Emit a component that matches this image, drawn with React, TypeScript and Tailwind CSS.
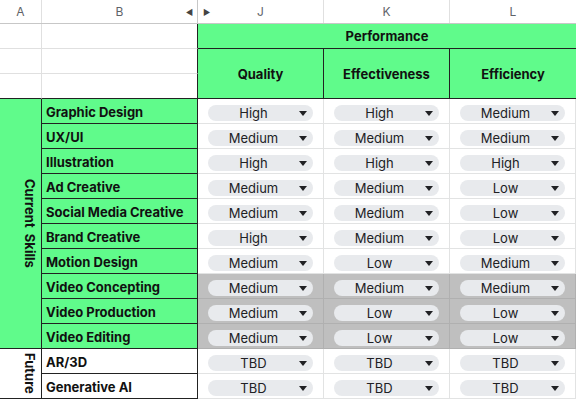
import React from 'react';

type Level = 'High' | 'Medium' | 'Low' | 'TBD';

const skills: { name: string; values: Level[]; shaded?: boolean }[] = [
  { name: 'Graphic Design', values: ['High', 'High', 'Medium'] },
  { name: 'UX/UI', values: ['Medium', 'Medium', 'Medium'] },
  { name: 'Illustration', values: ['High', 'High', 'High'] },
  { name: 'Ad Creative', values: ['Medium', 'Medium', 'Low'] },
  { name: 'Social Media Creative', values: ['Medium', 'Medium', 'Low'] },
  { name: 'Brand Creative', values: ['High', 'Medium', 'Low'] },
  { name: 'Motion Design', values: ['Medium', 'Low', 'Medium'] },
  { name: 'Video Concepting', values: ['Medium', 'Medium', 'Medium'], shaded: true },
  { name: 'Video Production', values: ['Medium', 'Low', 'Low'], shaded: true },
  { name: 'Video Editing', values: ['Medium', 'Low', 'Low'], shaded: true },
];

const future: { name: string; values: Level[] }[] = [
  { name: 'AR/3D', values: ['TBD', 'TBD', 'TBD'] },
  { name: 'Generative AI', values: ['TBD', 'TBD', 'TBD'] },
];

const Chip: React.FC<{ value: Level }> = ({ value }) => (
  <div className="flex items-center h-[16px] w-full rounded-full bg-[#e8eaed]">
    <span className="flex-1 text-center text-[13px] leading-none text-[#202124]">{value}</span>
    <svg width="8" height="5" viewBox="0 0 8 5" className="mr-[6px]">
      <path d="M0 0 L8 0 L4 5 Z" fill="#202124" />
    </svg>
  </div>
);

const DataCell: React.FC<{ value: Level; shaded?: boolean }> = ({ value, shaded }) => (
  <div
    className={`flex items-end pb-[2px] px-[10px] border-r border-b ${
      shaded ? 'bg-[#bfbfbf] border-[#b0b0b0]' : 'bg-white border-[#e2e3e3]'
    }`}
  >
    <Chip value={value} />
  </div>
);

const Label: React.FC<{ name: string; green?: boolean }> = ({ name, green }) => (
  <div
    className={`flex items-center pl-[4px] pt-[4px] border-r border-b border-[#222] text-[13px] font-bold text-[#111] ${
      green ? 'bg-[#60fb8b]' : 'bg-white'
    }`}
  >
    {name}
  </div>
);

export default function App() {
  return (
    <div className="w-[576px] h-[399px] overflow-hidden bg-white font-['Inter','Liberation_Sans',sans-serif]">
      {/* column letters */}
      <div className="grid grid-cols-[42px_156px_126px_126px_126px] h-[24px] border-b border-[#c7c7c7] text-[12px] text-[#5f6368]">
        <div className="flex items-center justify-center border-r border-[#e0e0e0]">A</div>
        <div className="relative flex items-center justify-center border-r border-[#c7c7c7]">
          B
          <span className="absolute right-[4px] text-[8px] text-[#444]">◀</span>
        </div>
        <div className="relative flex items-center justify-center border-r border-[#e0e0e0]">
          <span className="absolute left-[5px] text-[8px] text-[#444]">▶</span>
          J
        </div>
        <div className="flex items-center justify-center border-r border-[#e0e0e0]">K</div>
        <div className="flex items-center justify-center">L</div>
      </div>

      <div className="grid grid-cols-[42px_156px_126px_126px_126px] grid-rows-[repeat(15,25px)]">
        {/* top header block */}
        <div className="border-r border-b border-[#e0e0e0]" />
        <div className="border-r border-b border-[#e0e0e0] [border-right-color:#222]" />
        <div className="col-span-3 flex items-center justify-center pt-[2px] bg-[#60fb8b] border-b border-[#222] text-[13px] font-bold text-[#111]">
          Performance
        </div>
        <div className="border-r border-b border-[#e0e0e0]" />
        <div className="border-r border-b border-[#e0e0e0] [border-right-color:#222]" />
        {['Quality', 'Effectiveness', 'Efficiency'].map((h, i) => (
          <div
            key={h}
            className={`row-span-2 flex items-center justify-center pt-[2px] bg-[#60fb8b] border-b border-[#222] text-[13px] font-bold text-[#111] ${
              i < 2 ? 'border-r' : ''
            }`}
          >
            {h}
          </div>
        ))}
        <div className="border-r border-b border-[#222] [border-right-color:#e0e0e0]" />
        <div className="border-r border-b border-[#222]" />

        {/* current skills */}
        <div className="row-span-10 flex items-center justify-end pr-[5px] bg-[#60fb8b] border-r border-b border-[#222]">
          <span className="[writing-mode:vertical-rl] text-[13px] leading-none font-bold text-[#111] whitespace-pre">
            Current  Skills
          </span>
        </div>
        {skills.map((s) => (
          <React.Fragment key={s.name}>
            <Label name={s.name} green />
            {s.values.map((v, c) => (
              <DataCell key={c} value={v} shaded={s.shaded} />
            ))}
          </React.Fragment>
        ))}

        {/* future */}
        <div className="row-span-2 flex items-center justify-end pr-[5px] bg-white border-r border-b border-[#222]">
          <span className="[writing-mode:vertical-rl] text-[13px] leading-none font-bold text-[#111]">Future</span>
        </div>
        {future.map((s) => (
          <React.Fragment key={s.name}>
            <Label name={s.name} />
            {s.values.map((v, c) => (
              <DataCell key={c} value={v} />
            ))}
          </React.Fragment>
        ))}
      </div>
    </div>
  );
}
